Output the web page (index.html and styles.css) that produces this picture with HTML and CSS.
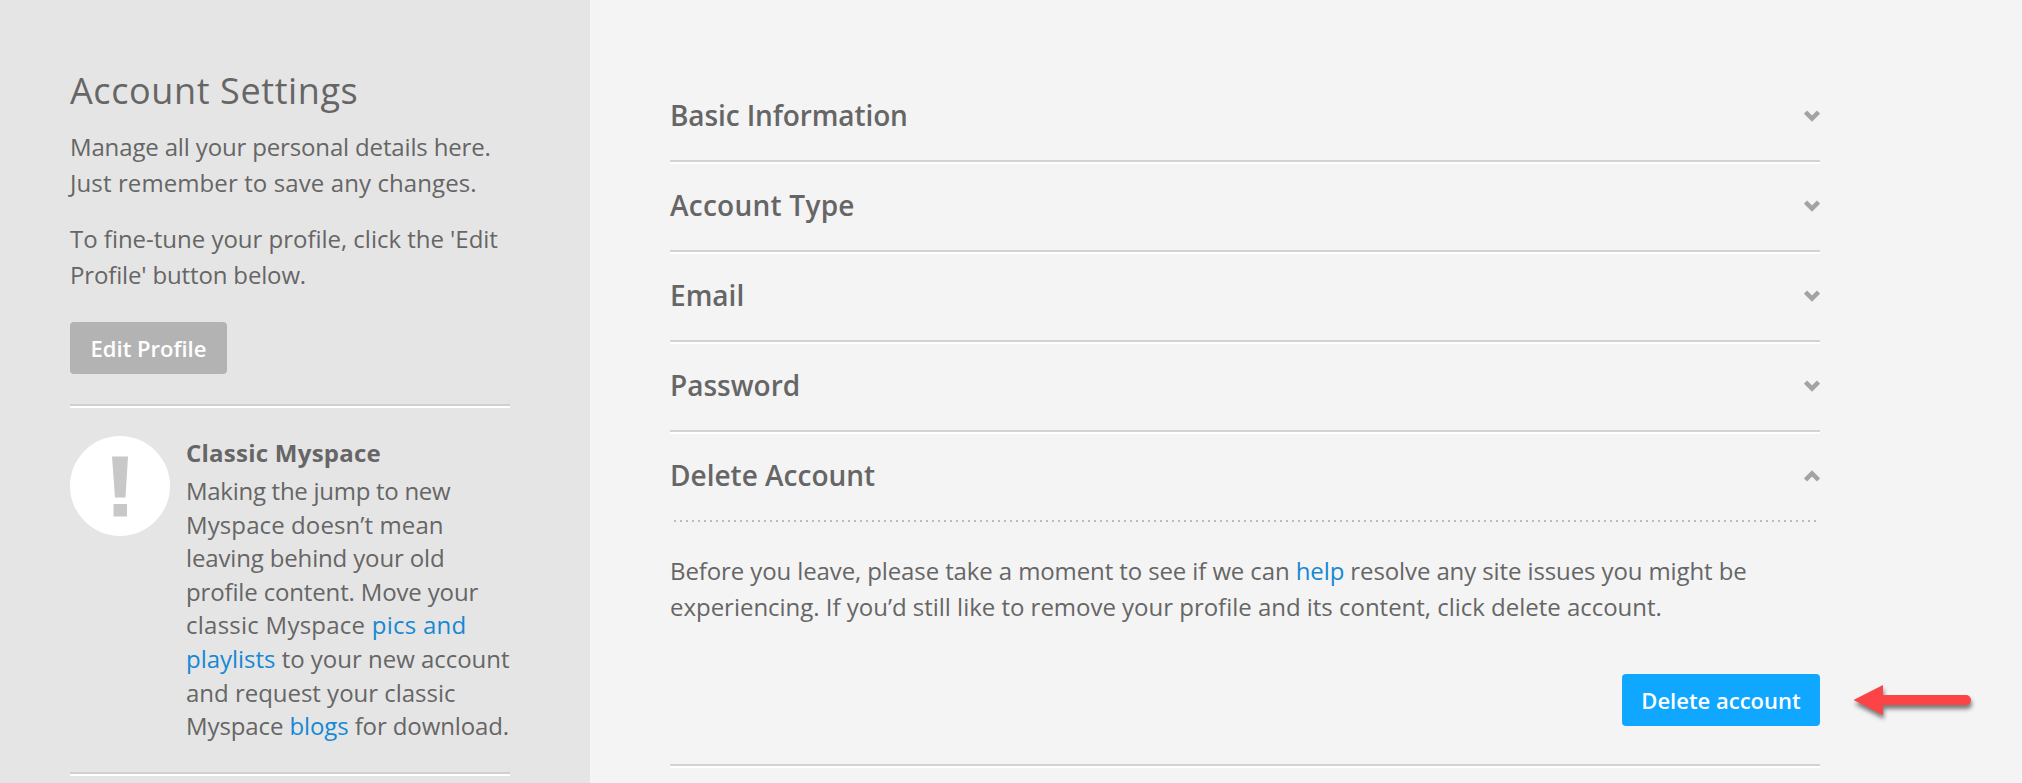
FILE: index.html
```
<!DOCTYPE html>
<html lang="en">
<head>
    <meta charset="UTF-8">
    <meta name="viewport" content="width=device-width, initial-scale=1.0">
    <title>Account Settings</title>
    <link rel="stylesheet" href="styles.css">
</head>
<body>
<div class="page">
    <aside class="sidebar">
        <h1>Account Settings</h1>
        <p>
            <span class="line tight">Manage all your personal details here.</span>
            <span class="line loose">Just remember to save any changes.</span>
        </p>
        <p>
            <span class="line">To fine-tune your profile, click the 'Edit</span>
            <span class="line tight">Profile' button below.</span>
        </p>
        <button class="btn btn-grey">Edit Profile</button>

        <!-- Classic Myspace notice -->
        <div class="notice">
            <svg class="notice-icon" viewBox="0 0 100 100">
                <circle cx="50" cy="50" r="50" fill="#fff"/>
                <path d="M42 20.500H58L55.500 61.500H45Z" fill="#c8c8c8"/>
                <path d="M43.500 68H57V80.500H43.500Z" fill="#c8c8c8"/>
            </svg>
            <div class="notice-text">
                <h2>Classic Myspace</h2>
                <span class="line tighter">Making the jump to new</span>
                <span class="line loose">Myspace doesn’t mean</span>
                <span class="line tight">leaving behind your old</span>
                <span class="line tight">profile content. Move your</span>
                <span class="line looser">classic Myspace <a href="#">pics and</a></span>
                <span class="line"><a href="#">playlists</a> to your new account</span>
                <span class="line">and request your classic</span>
                <span class="line snug">Myspace <a href="#">blogs</a> for download.</span>
            </div>
        </div>
    </aside>

    <main class="settings">
        <section class="row">
            <h3 class="snug">Basic Information</h3>
            <svg class="chevron" viewBox="0 0 16 12"><path d="M1.500 2L8 8.500L14.500 2"/></svg>
        </section>
        <section class="row">
            <h3 class="looser">Account Type</h3>
            <svg class="chevron" viewBox="0 0 16 12"><path d="M1.500 2L8 8.500L14.500 2"/></svg>
        </section>
        <section class="row">
            <h3>Email</h3>
            <svg class="chevron" viewBox="0 0 16 12"><path d="M1.500 2L8 8.500L14.500 2"/></svg>
        </section>
        <section class="row">
            <h3>Password</h3>
            <svg class="chevron" viewBox="0 0 16 12"><path d="M1.500 2L8 8.500L14.500 2"/></svg>
        </section>
        <section class="row open">
            <h3>Delete Account</h3>
            <svg class="chevron" viewBox="0 0 16 12"><path d="M1.500 10L8 3.500L14.500 10"/></svg>
        </section>
        <div class="dots"></div>
        <div class="delete-panel">
            <p>
                <span class="line snug">Before you leave, please take a moment to see if we can <a href="#">help</a> resolve any site issues you might be</span>
                <span class="line">experiencing. If you’d still like to remove your profile and its content, click delete account.</span>
            </p>
            <div class="actions">
                <button class="btn btn-blue">Delete account</button>
                <svg class="arrow" viewBox="0 0 130 50">
                    <path d="M3.500 25L33 10V20H116A5 5 0 0 1 116 30H33V40Z"/>
                </svg>
            </div>
        </div>
    </main>
</div>
</body>
</html>
```
FILE: styles.css
```
* {
    box-sizing: border-box;
}
body {
    margin: 0;
    font-family: "Open Sans", Arial, sans-serif;
    font-size: 24px;
    line-height: 36px;
    color: #666;
    background: #f4f4f4;
}
h1, h2, h3, p {
    margin: 0;
}
a {
    color: #1788d4;
    text-decoration: none;
}
.page {
    display: flex;
    height: 783px;
    overflow: hidden;
}

/* Sidebar */
.sidebar {
    flex: none;
    width: 590px;
    padding: 69px 80px 0 70px;
    background: #e5e5e5;
}
.sidebar h1 {
    margin-bottom: 16px;
    font-size: 36px;
    font-weight: 400;
    line-height: 44px;
    letter-spacing: 0.6px;
}
.sidebar p {
    margin-bottom: 20px;
}
.line {
    display: block;
    white-space: nowrap;
    letter-spacing: -0.02px;
}

/* Buttons */
.btn {
    display: block;
    height: 52px;
    padding: 0;
    border: 0;
    border-radius: 4px;
    font-family: inherit;
    font-size: 22px;
    font-weight: 600;
    line-height: 51px;
    color: #fff;
}
.btn-grey {
    width: 157px;
    margin-top: 29px;
    background: #b3b3b3;
}
.btn-blue {
    width: 198px;
    background: #0fa7ff;
}

/* Notice box, ruled above and below */
.notice {
    display: flex;
    gap: 16px;
    height: 370px;
    margin-top: 30px;
    padding-top: 30px;
    border-top: 2px solid #d0d0d0;
    border-bottom: 2px solid #d0d0d0;
    box-shadow: inset 0 2px #fff, 0 2px #fff;
}
.notice-icon {
    flex: none;
    width: 100px;
    height: 100px;
}
.notice-text {
    line-height: 33.6px;
}
.notice-text h2 {
    margin-bottom: 4px;
    font-size: 24px;
    font-weight: 700;
    line-height: 34px;
    letter-spacing: 0.25px;
}

/* Settings accordion */
.settings {
    flex: none;
    width: 1230px;
    padding: 74px 0 0 80px;
}
.row {
    display: flex;
    justify-content: space-between;
    height: 90px;
    padding-top: 20px;
    border-bottom: 2px solid #fff;
    box-shadow: inset 0 -2px #d3d3d3;
}
.row h3 {
    font-size: 28px;
    font-weight: 600;
    line-height: 42px;
}
.row.open {
    height: 86px;
    border: 0;
    box-shadow: none;
}
.chevron {
    width: 16px;
    height: 12px;
    margin-top: 16px;
    fill: none;
    stroke: #a3a3a3;
    stroke-width: 4.5;
}
.dots {
    height: 2px;
    margin: 0 4px;
    background: repeating-linear-gradient(90deg, #bbb 0 2px, transparent 2px 6px);
}
.delete-panel {
    height: 244px;
    padding-top: 31px;
    border-bottom: 2px solid #d3d3d3;
    box-shadow: 0 2px #fff;
}
.actions {
    display: flex;
    justify-content: flex-end;
    position: relative;
    margin-top: 49px;
}

/* Red arrow pointing at the delete button */
.arrow {
    position: absolute;
    left: 1180px;
    top: 1px;
    width: 130px;
    height: 50px;
    fill: #fc4345;
    filter: drop-shadow(1px 4px 2px rgba(0, 0, 0, 0.5));
}

/* Tracking */
.tighter {
    letter-spacing: -0.28px;
}
.tight {
    letter-spacing: -0.15px;
}
.snug {
    letter-spacing: -0.11px;
}
.loose {
    letter-spacing: 0.1px;
}
.looser {
    letter-spacing: 0.25px;
}
```
